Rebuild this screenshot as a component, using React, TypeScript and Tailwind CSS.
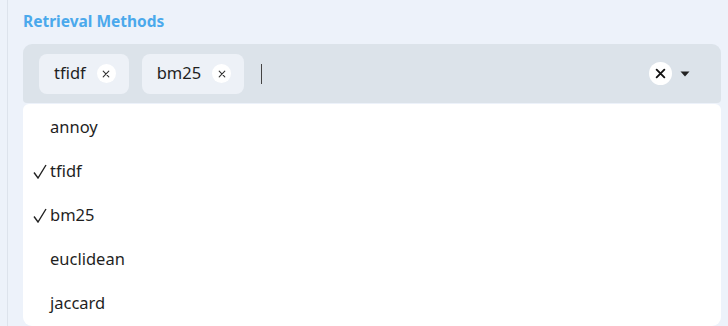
import { useState } from 'react';

const options = ['annoy', 'tfidf', 'bm25', 'euclidean', 'jaccard'];

function XIcon({ size = 10, stroke = 1.6 }: { size?: number; stroke?: number }) {
  return (
    <svg width={size} height={size} viewBox="0 0 10 10" fill="none" stroke="currentColor" strokeWidth={stroke} strokeLinecap="round">
      <path d="M1.5 1.5l7 7M8.5 1.5l-7 7" />
    </svg>
  );
}

function Check() {
  return (
    <svg width="14" height="15" viewBox="0 0 14 15" fill="none" stroke="currentColor" strokeWidth="1.4">
      <path d="M1 8.5l4 5.5L13 1" />
    </svg>
  );
}

export default function App() {
  const [selected, setSelected] = useState<string[]>(['tfidf', 'bm25']);

  const toggle = (o: string) =>
    setSelected(s => (s.includes(o) ? s.filter(x => x !== o) : [...s, o]));

  return (
    <div
      className="w-[728px] h-[326px] overflow-hidden bg-[#edf2fa] pl-[7px]"
      style={{ fontFamily: '"Noto Sans", "Open Sans", sans-serif' }}
    >
      <div className="h-full border-l border-[#dde3ec] pl-[15px] pr-[7px] pt-[10px]">
        {/* Label */}
        <div className="text-[15.5px] font-bold text-[#4ba9ec] leading-[22px] mb-[12px]">Retrieval Methods</div>

        {/* Control */}
        <div className="h-[59px] rounded-t-[9px] rounded-b-[4px] bg-[#dce3ea] flex items-center pl-[16px] pr-[31px]">
          <div className="flex items-center gap-[13px] flex-1">
            {selected.map(s => (
              <div key={s} className="h-[40px] rounded-[8px] bg-[#edf1f7] flex items-center pl-[15px] pr-[13px] gap-[11px]">
                <span className="text-[16.5px] text-[#1f1f1f]">{s}</span>
                <button
                  onClick={() => toggle(s)}
                  className="w-[19px] h-[19px] rounded-full bg-white flex items-center justify-center text-[#333]"
                >
                  <XIcon size={8} stroke={1.4} />
                </button>
              </div>
            ))}
            <div className="w-px h-[20px] bg-[#444] ml-[4px]" />
          </div>
          <div className="flex items-center gap-[8px]">
            <button
              onClick={() => setSelected([])}
              className="w-[23px] h-[23px] rounded-full bg-white flex items-center justify-center text-[#111]"
            >
              <XIcon size={11} stroke={1.7} />
            </button>
            <svg width="10" height="6" viewBox="0 0 10 6" className="text-[#222]">
              <path d="M0.5 0.5h9L5 5.5z" fill="currentColor" />
            </svg>
          </div>
        </div>

        {/* Menu */}
        <div className="mt-px bg-white rounded-t-[6px] rounded-b-[9px] pt-[1px] h-[222px]">
          {options.map(o => (
            <div
              key={o}
              onClick={() => toggle(o)}
              className="h-[44px] flex items-center text-[16.5px] text-[#1f1f1f] cursor-pointer"
            >
              <span className="w-[27px] pl-[10px] flex items-center text-[#222]">
                {selected.includes(o) ? <Check /> : null}
              </span>
              <span>{o}</span>
            </div>
          ))}
        </div>
      </div>
    </div>
  );
}
